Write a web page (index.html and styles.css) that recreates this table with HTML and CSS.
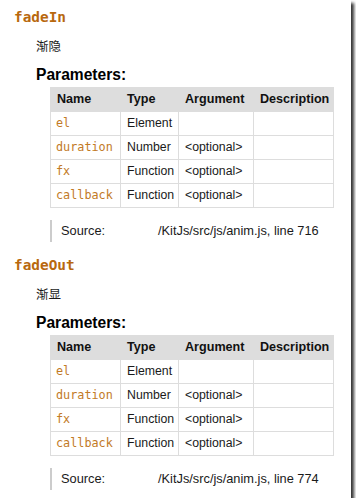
FILE: index.html
```html
<!DOCTYPE html>
<html lang="zh">
<head>
    <meta charset="UTF-8">
    <title>anim.js</title>
    <link rel="stylesheet" href="styles.css">
</head>
<body>
    <div class="shot">
        <!-- fadeIn -->
        <section class="method">
            <h4 class="name">fadeIn</h4>
            <p class="desc">渐隐</p>
            <h5 class="params-title">Parameters:</h5>
            <table class="params">
                <colgroup>
                    <col class="c-name"><col class="c-type"><col class="c-arg"><col class="c-desc">
                </colgroup>
                <thead>
                    <tr><th>Name</th><th>Type</th><th>Argument</th><th>Description</th></tr>
                </thead>
                <tbody>
                    <tr><td class="code">el</td><td>Element</td><td></td><td></td></tr>
                    <tr><td class="code">duration</td><td>Number</td><td>&lt;optional&gt;</td><td></td></tr>
                    <tr><td class="code">fx</td><td>Function</td><td>&lt;optional&gt;</td><td></td></tr>
                    <tr><td class="code">callback</td><td>Function</td><td>&lt;optional&gt;</td><td></td></tr>
                </tbody>
            </table>
            <div class="source">
                <span class="label">Source:</span>
                <span>/KitJs/src/js/anim.js, line 716</span>
            </div>
        </section>

        <!-- fadeOut -->
        <section class="method">
            <h4 class="name">fadeOut</h4>
            <p class="desc">渐显</p>
            <h5 class="params-title">Parameters:</h5>
            <table class="params">
                <colgroup>
                    <col class="c-name"><col class="c-type"><col class="c-arg"><col class="c-desc">
                </colgroup>
                <thead>
                    <tr><th>Name</th><th>Type</th><th>Argument</th><th>Description</th></tr>
                </thead>
                <tbody>
                    <tr><td class="code">el</td><td>Element</td><td></td><td></td></tr>
                    <tr><td class="code">duration</td><td>Number</td><td>&lt;optional&gt;</td><td></td></tr>
                    <tr><td class="code">fx</td><td>Function</td><td>&lt;optional&gt;</td><td></td></tr>
                    <tr><td class="code">callback</td><td>Function</td><td>&lt;optional&gt;</td><td></td></tr>
                </tbody>
            </table>
            <div class="source">
                <span class="label">Source:</span>
                <span>/KitJs/src/js/anim.js, line 774</span>
            </div>
        </section>
    </div>
</body>
</html>
```

FILE: styles.css
```css
body {
    margin: 0;
    background: #fff;
    font-family: 'Liberation Sans', Arial, 'Noto Sans CJK SC', sans-serif;
    font-size: 12.3px;
    color: #1a1a1a;
}

/* screenshot frame with its drop shadow */
.shot {
    width: 351px;
    height: 498px;
    background: #fff;
    box-shadow: 3px 3px 3px rgba(0, 0, 0, 0.8);
    overflow: hidden;
}

.method {
    margin-bottom: 6px;
}

.name {
    margin: 0;
    padding: 8px 0 0 14px;
    font-family: 'DejaVu Sans Mono', monospace;
    font-size: 14.4px;
    line-height: 18px;
    font-weight: bold;
    color: #b8680e;
}

.desc {
    margin: 12px 0 0 36px;
    line-height: 16px;
    font-family: 'Noto Sans CJK SC', sans-serif;
    font-size: 12.5px;
}

.params-title {
    margin: 12px 0 0 36px;
    font-size: 15.6px;
    line-height: 18px;
    font-weight: bold;
    color: #000;
}

.params {
    margin: 3px 0 0 50px;
    width: 283px;
    table-layout: fixed;
    border-collapse: collapse;
}

.c-name { width: 70px; }
.c-type { width: 58px; }
.c-arg { width: 75px; }
.c-desc { width: 80px; }

.params th,
.params td {
    border: 1px solid #ddd;
    padding: 4px 6px;
    height: 15px;
    line-height: 15px;
    text-align: left;
    white-space: nowrap;
    overflow: hidden;
}

.params th {
    background: #ddd;
    font-size: 12.6px;
    font-weight: bold;
    color: #111;
}

.params td.code {
    font-family: 'DejaVu Sans Mono', monospace;
    font-size: 11.8px;
    color: #c27a26;
    padding-left: 5px;
}

.source {
    display: flex;
    margin: 12px 0 0 50px;
    height: 22px;
    line-height: 22px;
    padding-left: 9px;
    border-left: 2px solid #ccc;
    font-size: 12.8px;
}

.source .label {
    width: 97px;
}
```
